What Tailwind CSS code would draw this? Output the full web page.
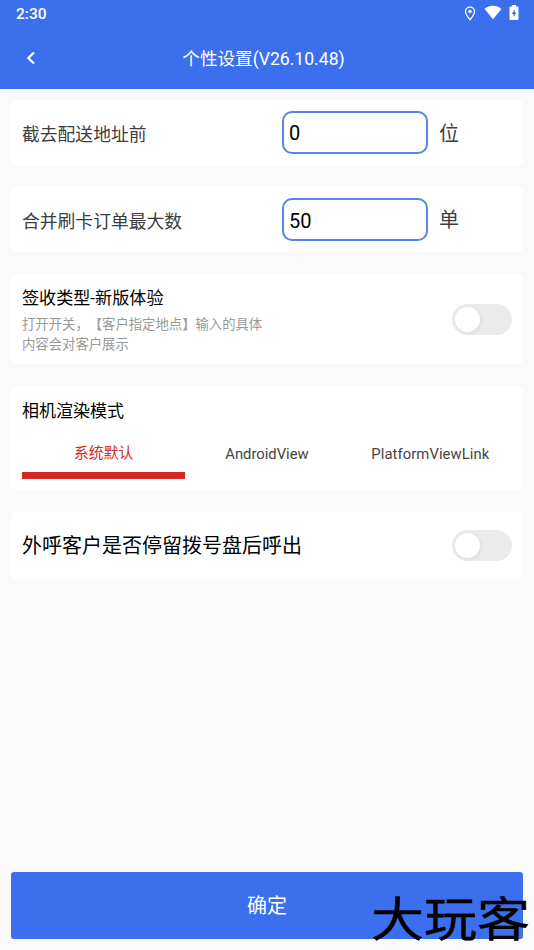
<!DOCTYPE html>
<html lang="zh-CN">
<head>
<meta charset="utf-8">
<title>个性设置</title>
<script src="https://cdn.jsdelivr.net/npm/@tailwindcss/browser@4"></script>
</head>
<body class="relative flex h-[950px] w-[534px] flex-col overflow-hidden bg-[#fafafa] font-[Roboto,'Noto_Sans_CJK_SC',sans-serif] text-black">
  <header class="h-[89px] shrink-0 bg-[#3b6fee] text-white">
    <div class="flex h-7 items-center justify-between pr-[15px] pl-4">
      <span class="text-[15.5px] leading-7 font-medium">2:30</span>
      <div class="flex items-center">
        <svg class="mt-[-2px] mr-[8px] h-[15px] w-[12px]" viewBox="0 0 12 15" fill="none" stroke="currentColor" stroke-width="1.3"><path d="M6 1.1C3.4 1.1 1.5 3 1.5 5.5C1.5 8.500 6 13.700 6 13.700S10.500 8.500 10.500 5.500C10.500 3 8.600 1.100 6 1.100Z"/><circle cx="6" cy="5.500" r="1.700" fill="currentColor" stroke="none"/></svg>
        <svg class="mt-[-3px] mr-[7px] h-[15px] w-[18px]" viewBox="0 0 18 15" fill="currentColor"><path d="M.600 4C5.500-.200 12.500-.200 17.400 4L9 14.300Z"/></svg>
        <svg class="mt-[-3px] h-[15px] w-[10px]" viewBox="0 0 10 15"><path fill="currentColor" d="M3 0H7V1.500H8.500Q9.500 1.500 9.500 2.500V14Q9.500 15 8.500 15H1.500Q.500 15 .500 14V2.500Q.500 1.500 1.500 1.500H3Z"/><path fill="#3b6fee" d="M5.800 4.200L2.800 9H4.600V12.200L7.400 7.400H5.800Z"/></svg>
      </div>
    </div>
    <div class="grid h-[61px] grid-cols-[60px_1fr_67px] items-center">
      <svg class="mt-[-1px] ml-[25px] h-[14px] w-[12px]" viewBox="0 0 12 14" fill="none" stroke="currentColor" stroke-width="2.200"><path d="M9 1.500L3.300 7L9 12.500"/></svg>
      <h1 class="text-center text-[17.6px] leading-[26px]">个性设置(V26.10.48)</h1>
    </div>
  </header>

  <main class="mx-[11px] mt-[11px] flex flex-1 flex-col">
    <section class="flex h-[65px] items-center rounded-[5px] bg-white pl-[11px]">
      <label class="w-[260px] pt-1.5 text-[17.8px] text-[#3d3d3d]">截去配送地址前</label>
      <input class="h-[43px] w-[146px] rounded-[10px] border-2 border-[#5a83e6] px-[5px] text-[20px]" value="0">
      <span class="ml-[11px] pt-0.5 text-[20px] text-[#3d3d3d]">位</span>
    </section>
    <section class="mt-[22px] flex h-[65px] items-center rounded-[5px] bg-white pl-[11px]">
      <label class="w-[260px] pt-1.5 text-[17.8px] text-[#3d3d3d]">合并刷卡订单最大数</label>
      <input class="h-[43px] w-[146px] rounded-[10px] border-2 border-[#5a83e6] px-[5px] pt-0.5 text-[20px]" value="50">
      <span class="ml-[11px] text-[20px] text-[#3d3d3d]">单</span>
    </section>
    <section class="mt-[22px] flex h-[90px] items-center justify-between rounded-[5px] bg-white px-[11px]">
      <div class="pt-0.5">
        <h2 class="text-[17.1px] leading-[26px]">签收类型-新版体验</h2>
        <p class="mt-1 text-[13.35px] leading-5 whitespace-nowrap text-[#999] [text-spacing-trim:space-all]">打开开关，【客户指定地点】输入的具体<br>内容会对客户展示</p>
      </div>
      <div class="flex h-[31px] w-[60px] items-center rounded-full bg-[#ebebeb] pl-[3px]"><span class="size-[25px] rounded-full bg-white shadow-[1px_1px_4px_rgba(0,0,0,0.08)]"></span></div>
    </section>
    <section class="mt-[23px] h-[103px] rounded-[5px] bg-white px-[11px] pt-[11px]">
      <h2 class="text-[17px] leading-[26px]">相机渲染模式</h2>
      <div class="mt-[12px] grid h-[43px] grid-cols-3 text-center text-[14.8px] leading-[36px] text-[#444]">
        <div class="border-b-[7px] border-[#d32822] leading-[35px] text-[#d32822]">系统默认</div>
        <div>AndroidView</div>
        <div class="tracking-[0.08px]">PlatformViewLink</div>
      </div>
    </section>
    <section class="mt-[22px] flex h-[67px] items-center justify-between rounded-[5px] bg-white px-[11px]">
      <h2 class="text-[20px]">外呼客户是否停留拨号盘后呼出</h2>
      <div class="flex h-[31px] w-[60px] items-center rounded-full bg-[#ebebeb] pl-[3px]"><span class="size-[25px] rounded-full bg-white shadow-[1px_1px_4px_rgba(0,0,0,0.08)]"></span></div>
    </section>
    <button class="mt-auto mb-[11px] h-[67px] rounded-[3px] bg-[#3b6fee] text-[20px] text-white">确定</button>
  </main>

  <div class="absolute top-[893px] left-[371px] origin-center scale-y-[.87] text-[53px] leading-[54px] font-normal whitespace-nowrap text-black [-webkit-text-stroke:0.5px_black]">大玩客</div>
</body>
</html>
